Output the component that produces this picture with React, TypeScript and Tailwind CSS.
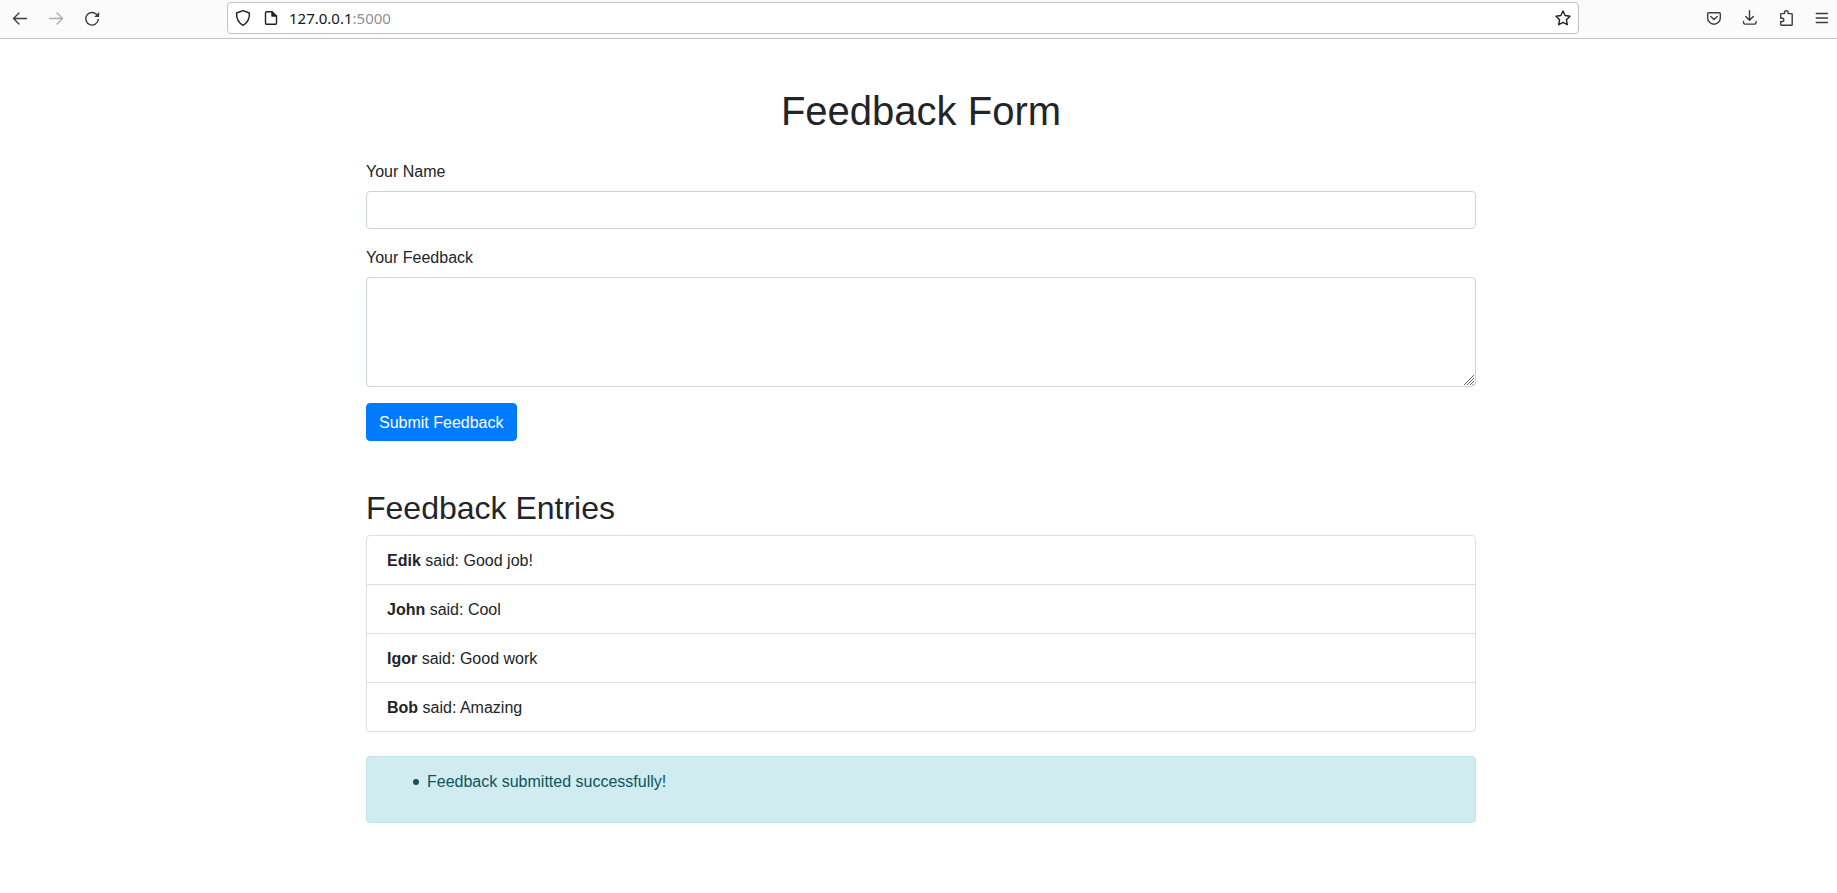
import type { ReactNode } from "react";

function Icon({ children, className = "" }: { children: ReactNode; className?: string }) {
  return (
    <svg
      width="16"
      height="16"
      viewBox="0 0 16 16"
      fill="none"
      stroke="currentColor"
      strokeWidth="1.4"
      strokeLinecap="round"
      strokeLinejoin="round"
      className={`block shrink-0 overflow-visible ${className}`}
    >
      {children}
    </svg>
  );
}

function BrowserBar() {
  return (
    <header className="flex h-[39px] items-center border-b border-[#c4c4c4] bg-[#fbfbfb] pb-[2px] pl-3 text-[#3c3c3c]">
      <div className="flex items-center gap-5">
        <Icon>
          <path d="M14.500 8.500H1.500M7 3L1.500 8.500L7 14" />
        </Icon>
        <Icon className="text-[#adadad]">
          <path d="M1.500 8.500h13M9 3l5.500 5.500L9 14" />
        </Icon>
        <Icon>
          <path d="M12.500 4.300A6.300 6.300 0 1 0 14.300 9.500" />
          <path d="M15.200 2v5h-5z" fill="currentColor" stroke="none" />
        </Icon>
      </div>
      <div className="ml-[127px] flex h-8 w-[1352px] items-center rounded border border-[#c2c2c2] bg-white pr-[7px] pl-[7px] text-[#202020]">
        <Icon>
          <path d="M8 .7L14.400 3C14.700 8.500 12.800 12.500 8 15.300C3.200 12.500 1.300 8.500 1.600 3z" />
        </Icon>
        <Icon className="ml-3">
          <path d="M9 1.700H3.700a1.200 1.200 0 0 0-1.200 1.200v10.200a1.200 1.200 0 0 0 1.200 1.200h8.600a1.200 1.200 0 0 0 1.200-1.200V6" />
          <path d="M9 1.700v4.300h4.500z" fill="currentColor" />
        </Icon>
        <span className="ml-[10px] font-['Noto_Sans',sans-serif] text-[15px] leading-5 text-[#151515]">
          127.0.0.1<span className="text-[#8f8f8f]">:5000</span>
        </span>
        <Icon className="ml-auto">
          <path d="M8 1l2.100 4.500 4.900.7-3.600 3.500.9 5L8 12.300 3.700 14.700l.9-5L1 6.200l4.900-.7z" />
        </Icon>
      </div>
      <div className="ml-[127px] flex items-center gap-5">
        <Icon>
          <path d="M2.700 2.700h10.600a1 1 0 0 1 1 1v4.200a6.300 6.300 0 0 1-12.600 0V3.700a1 1 0 0 1 1-1z" />
          <path d="M4.800 6.600L8 9.600l3.200-3" />
        </Icon>
        <Icon>
          <path d="M7.500 .7v9.300M3.700 6.500L7.500 10.300l3.800-3.800M1.500 11.500v1a1.600 1.600 0 0 0 1.600 1.600h9.400a1.600 1.600 0 0 0 1.600-1.600v-1" />
        </Icon>
        <Icon>
          <path d="M2.700 7.200V4.500a.9.9 0 0 1 .9-.9h2.900V2.500a1.800 1.800 0 0 1 3.600 0v1.100h3.200a.9.900 0 0 1 .9.900v9.900a.9.900 0 0 1-.9.900H3.600a.9.900 0 0 1-.9-.9v-2.900h1.600a1.600 1.600 0 0 0 0-3.200H2.700z" />
        </Icon>
        <Icon>
          <path d="M2.300 3.500h11.200M2.300 8h11.200M2.300 12.500h11.200" />
        </Icon>
      </div>
    </header>
  );
}

const entries = [
  { name: "Edik", text: "Good job!" },
  { name: "John", text: "Cool" },
  { name: "Igor", text: "Good work" },
  { name: "Bob", text: "Amazing" },
];

export default function App() {
  return (
    <div className="min-h-screen bg-white font-['Liberation_Sans',Arial,sans-serif] text-base leading-6 text-[#212529]">
      <BrowserBar />
      <main className="ml-[366px] w-[1110px] pt-12">
        <h1 className="mb-6 text-center text-[40px] leading-[48px]">Feedback Form</h1>
        <form>
          <div className="mb-4">
            <label htmlFor="name" className="mb-[7px] block pt-px">Your Name</label>
            <input id="name" className="block h-[38px] w-full rounded border border-[#ced4da] bg-white px-3" />
          </div>
          <div className="relative mb-4">
            <label htmlFor="feedback" className="mb-[7px] block pt-px">Your Feedback</label>
            <textarea
              id="feedback"
              className="block h-[110px] w-full resize-none rounded border border-[#ced4da] bg-white px-3 py-1.5"
            />
            <svg
              width="10"
              height="10"
              viewBox="0 0 10 10"
              className="absolute right-[2px] bottom-[2px]"
              stroke="#666"
              strokeWidth="1"
            >
              <path d="M0 10L10 0M3 10l7-7M6 10l4-4M8.500 10l1.500-1.500" />
            </svg>
          </div>
          <button
            type="button"
            className="block h-[38px] rounded border border-[#007bff] bg-[#007bff] px-3 pt-[2px] text-white"
          >
            Submit Feedback
          </button>
        </form>
        <h2 className="mt-12 mb-2 text-[32px] leading-[38px]">Feedback Entries</h2>
        <ul className="divide-y divide-[#dfdfdf] rounded border border-[#dfdfdf]">
          {entries.map((entry) => (
            <li key={entry.name} className="px-5 pt-[13px] pb-[11px]">
              <strong className="font-bold">{entry.name}</strong> said: {entry.text}
            </li>
          ))}
        </ul>
        <div className="mt-6 h-[67px] rounded border border-[#bee5eb] bg-[#d1ecf1] px-5 pt-[13px] text-[#0c5460]">
          <ul className="pl-[26px]">
            <li className="flex items-center gap-2">
              <span className="size-1.5 rounded-full bg-[#0c5460]" />
              Feedback submitted successfully!
            </li>
          </ul>
        </div>
      </main>
    </div>
  );
}
